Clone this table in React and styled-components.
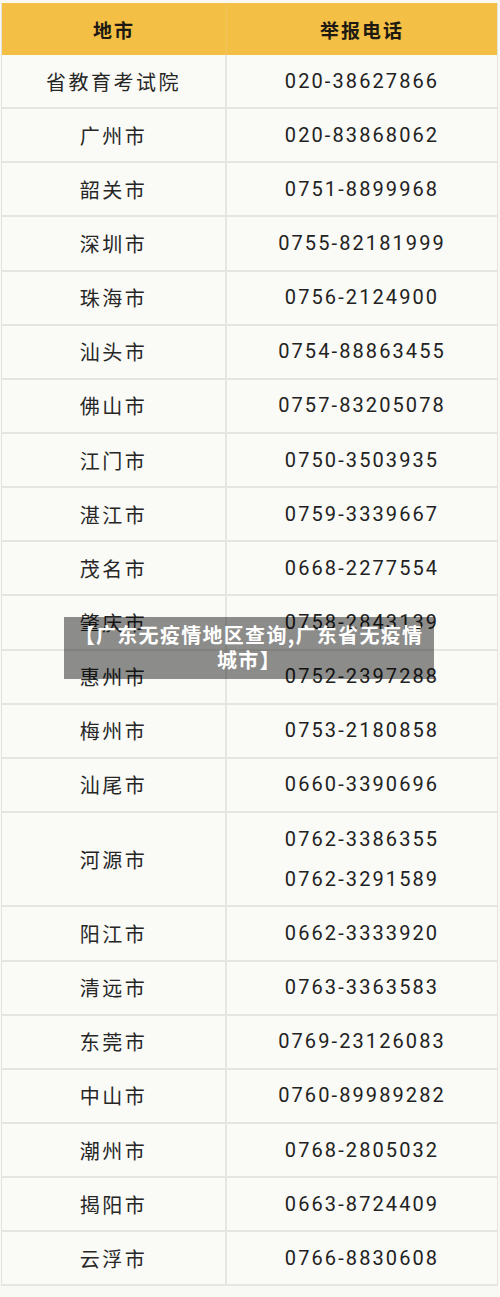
import styled, { createGlobalStyle } from 'styled-components';

const rows = [
    { city: '省教育考试院', phones: ['020-38627866'] },
    { city: '广州市', phones: ['020-83868062'] },
    { city: '韶关市', phones: ['0751-8899968'] },
    { city: '深圳市', phones: ['0755-82181999'] },
    { city: '珠海市', phones: ['0756-2124900'] },
    { city: '汕头市', phones: ['0754-88863455'] },
    { city: '佛山市', phones: ['0757-83205078'] },
    { city: '江门市', phones: ['0750-3503935'] },
    { city: '湛江市', phones: ['0759-3339667'] },
    { city: '茂名市', phones: ['0668-2277554'] },
    { city: '肇庆市', phones: ['0758-2843139'] },
    { city: '惠州市', phones: ['0752-2397288'] },
    { city: '梅州市', phones: ['0753-2180858'] },
    { city: '汕尾市', phones: ['0660-3390696'] },
    { city: '河源市', phones: ['0762-3386355', '0762-3291589'] },
    { city: '阳江市', phones: ['0662-3333920'] },
    { city: '清远市', phones: ['0763-3363583'] },
    { city: '东莞市', phones: ['0769-23126083'] },
    { city: '中山市', phones: ['0760-89989282'] },
    { city: '潮州市', phones: ['0768-2805032'] },
    { city: '揭阳市', phones: ['0663-8724409'] },
    { city: '云浮市', phones: ['0766-8830608'] },
];

function App() {
    return (
        <>
            <GlobalStyle />
            <Page>
                <Table>
                    <HeadCell>地市</HeadCell>
                    <HeadCell last>举报电话</HeadCell>
                    {rows.map((row) => (
                        <Row key={row.city} tall={row.phones.length > 1}>
                            <CityCell>{row.city}</CityCell>
                            <PhoneCell>
                                {row.phones.map((p) => (
                                    <span key={p}>{p}</span>
                                ))}
                            </PhoneCell>
                        </Row>
                    ))}
                </Table>
                <Caption>【广东无疫情地区查询,广东省无疫情城市】</Caption>
            </Page>
        </>
    );
}

const GlobalStyle = createGlobalStyle`
body {
    margin: 0;
    background: #f8f8f4;
    font-family: "Noto Sans CJK SC", sans-serif;
}
`;

const Page = styled.div`
position: relative;
width: 500px;
height: 1297px;
padding: 3px 2px 0 1px;
box-sizing: border-box;
`;

const Table = styled.div`
display: grid;
grid-template-columns: 225px 1fr;
border-left: 1px solid #e4e4de;
border-right: 1px solid #e4e4de;
background: #fafaf6;
`;

const HeadCell = styled.div`
height: 52px;
display: flex;
align-items: center;
justify-content: center;
background: #f3bf45;
color: #1e1a12;
font-weight: 700;
font-size: 19px;
letter-spacing: 2px;
border-right: ${(props) => (props.last ? 'none' : '1px solid #f0c45c')};
`;

const Row = styled.div`
display: contents;
& > div {
    height: ${(props) => (props.tall ? '94.5px' : '54.15px')};
}
`;

const CityCell = styled.div`
display: flex;
align-items: center;
justify-content: center;
box-sizing: border-box;
border-bottom: 2px solid #e6e6e0;
border-right: 2px solid #e6e6e0;
color: #262626;
font-size: 20px;
letter-spacing: 2.5px;
`;

const PhoneCell = styled.div`
display: flex;
flex-direction: column;
align-items: center;
justify-content: center;
gap: 13px;
box-sizing: border-box;
border-bottom: 2px solid #e6e6e0;
color: #222222;
font-family: Roboto, "Noto Sans CJK SC", sans-serif;
font-size: 20px;
letter-spacing: 2.1px;
line-height: 27px;
`;

const Caption = styled.div`
position: absolute;
top: 617px;
left: 64px;
width: 370px;
height: 62px;
box-sizing: border-box;
padding: 5px 8px 0;
background: rgba(0, 0, 0, 0.44);
color: #ffffff;
font-weight: 700;
font-size: 20px;
letter-spacing: 1.3px;
line-height: 25px;
text-align: center;
`;

export default App;
